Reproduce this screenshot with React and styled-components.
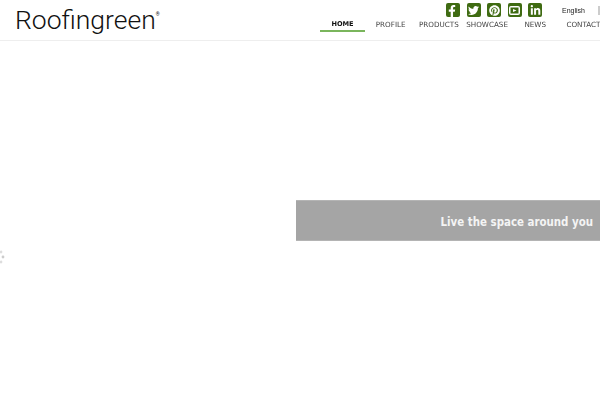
import React from 'react';
import styled, { createGlobalStyle } from 'styled-components';
import { FaFacebookF, FaTwitter, FaPinterest, FaLinkedinIn } from 'react-icons/fa';

const GlobalStyle = createGlobalStyle`
  html, body {
    margin: 0;
    padding: 0;
    background: #fff;
    overflow: hidden;
  }
`;

const Page = styled.div`
  width: 600px;
  height: 400px;
  overflow: hidden;
  display: flex;
  flex-direction: column;
  font-family: "DejaVu Sans", sans-serif;
`;

const Header = styled.header`
  height: 40px;
  flex: none;
  border-bottom: 1px solid #eee;
  display: flex;
  justify-content: space-between;
`;

const Logo = styled.div`
  padding-left: 15px;
  font-family: Roboto, sans-serif;
  font-size: 26.5px;
  font-weight: 300;
  line-height: 40px;
  color: #111;
  sup {
    font-size: 5px;
    font-weight: 400;
    line-height: 0;
    vertical-align: 13px;
  }
`;

const Right = styled.div`
  width: 280px;
  flex: none;
  overflow: hidden;
  display: flex;
  flex-direction: column;
  will-change: transform;
`;

const TopRow = styled.div`
  height: 17px;
  padding: 3px 0 0 126px;
  display: flex;
  align-items: flex-start;
`;

const Social = styled.a`
  width: 14px;
  height: 14px;
  margin-right: 6.5px;
  flex: none;
  background: #3f6b12;
  border-radius: 2px;
  color: #fff;
  display: flex;
  align-items: ${(p) => (p.$low ? 'flex-end' : 'center')};
  justify-content: ${(p) => (p.$low ? 'flex-end' : 'center')};
  padding-right: ${(p) => (p.$low ? '2px' : '0')};
  box-sizing: border-box;
  font-size: ${(p) => p.$size}px;
  overflow: hidden;
`;

const Lang = styled.span`
  margin: 3px 0 0 13.5px;
  font-family: "Liberation Sans", sans-serif;
  font-size: 7px;
  line-height: 10px;
  color: #222;
`;

const LangMark = styled.span`
  width: 2px;
  height: 9px;
  margin: 3px 0 0 13px;
  background: #ccc;
`;

const Nav = styled.nav`
  display: flex;
  gap: 3.2px;
  margin-top: -1px;
`;

const NavItem = styled.a`
  width: 45px;
  flex: none;
  height: 11px;
  text-align: center;
  white-space: nowrap;
  font-size: ${(p) => (p.$active ? '6.6px' : '7.2px')};
  line-height: 11px;
  color: ${(p) => (p.$active ? '#111' : '#444')};
  font-weight: ${(p) => (p.$active ? 700 : 400)};
  border-bottom: 2px solid ${(p) => (p.$active ? '#7ab55c' : 'transparent')};
`;

const Stage = styled.main`
  flex: 1;
  display: flex;
  flex-direction: column;
  align-items: flex-end;
  padding-top: 159px;
  position: relative;
`;

const Caption = styled.div`
  width: 304px;
  height: 41px;
  background: #a5a5a5;
  border-top: 1px solid #b4b4b4;
  border-bottom: 1px solid #b4b4b4;
  box-sizing: border-box;
  padding-right: 7px;
  text-align: right;
  color: #f4f4f4;
  font-size: 11.4px;
  font-stretch: condensed;
  font-weight: 700;
  line-height: 42px;
`;

const Spinner = styled.svg`
  position: absolute;
  left: 0;
  top: 208px;
`;

const YoutubeGlyph = () => (
  <svg width="11" height="9" viewBox="0 0 11 9">
    <rect x="0" y="0" width="11" height="9" rx="2" fill="#fff" />
    <rect x="1.5" y="1.5" width="8" height="6" fill="#3f6b12" />
    <path d="M4 3 L7.5 4.5 L4 6 Z" fill="#fff" />
  </svg>
);

const socials = [
  { key: 'fb', node: <FaFacebookF />, low: true, size: 12 },
  { key: 'tw', node: <FaTwitter />, size: 11 },
  { key: 'pin', node: <FaPinterest />, size: 11 },
  { key: 'yt', node: <YoutubeGlyph />, size: 10 },
  { key: 'in', node: <FaLinkedinIn />, size: 11 },
];

const nav = [
  { label: 'HOME', active: true },
  { label: 'PROFILE' },
  { label: 'PRODUCTS' },
  { label: 'SHOWCASE' },
  { label: 'NEWS' },
  { label: 'CONTACT' },
];

export default function App() {
  return (
    <Page>
      <GlobalStyle />
      <Header>
        <Logo>Roofingreen<sup>®</sup></Logo>
        <Right>
          <TopRow>
            {socials.map((s) => (
              <Social key={s.key} $low={s.low} $size={s.size}>{s.node}</Social>
            ))}
            <Lang>English</Lang>
            <LangMark />
          </TopRow>
          <Nav>
            {nav.map((n) => (
              <NavItem key={n.label} $active={n.active}>{n.label}</NavItem>
            ))}
          </Nav>
        </Right>
      </Header>
      <Stage>
        <Caption>Live the space around you</Caption>
        <Spinner width="6" height="16" viewBox="0 0 6 16">
          <circle cx="1" cy="3" r="1.4" fill="#ddd" />
          <circle cx="3" cy="8" r="1.4" fill="#ccc" />
          <circle cx="1" cy="13" r="1.4" fill="#ddd" />
        </Spinner>
      </Stage>
    </Page>
  );
}
